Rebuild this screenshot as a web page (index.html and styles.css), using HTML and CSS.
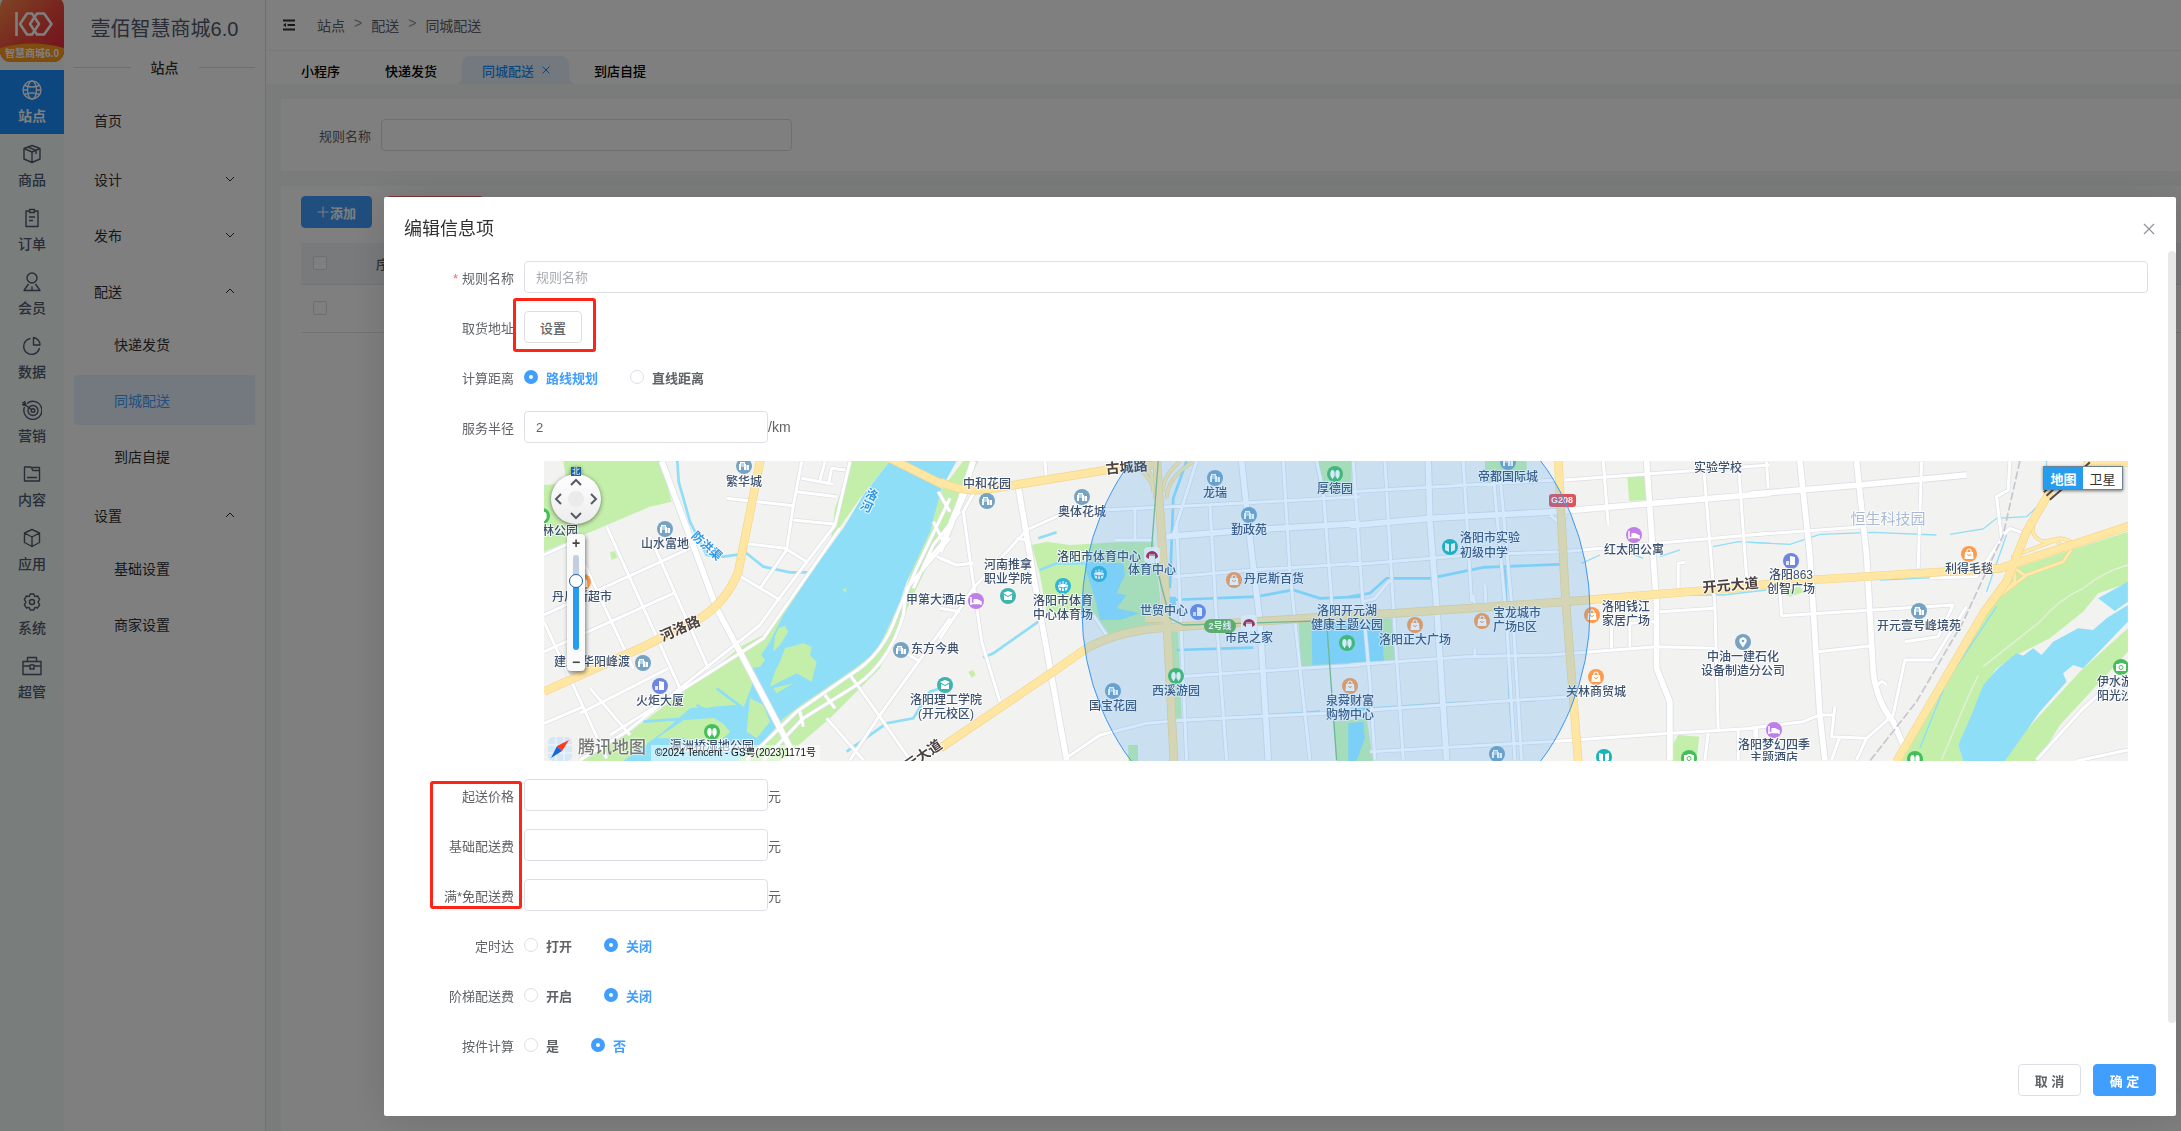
FILE: index.html
```html
<!DOCTYPE html>
<html lang="zh-CN">
<head>
    <meta charset="UTF-8">
    <meta name="viewport" content="width=device-width, initial-scale=1.0">
    <title>同城配送 - 壹佰智慧商城6.0</title>
    <link rel="stylesheet" href="styles.css">
</head>
<body>

    <div class="app">
        <!-- Icon rail -->
        <nav class="rail">
            <div class="logo">
                <svg viewBox="0 0 64 62" width="64" height="62">
                    <defs>
                        <linearGradient id="logoBg" x1="0" y1="0" x2="1" y2="1">
                            <stop offset="0" stop-color="#ff8a4a"/>
                            <stop offset="0.5" stop-color="#f04a3c"/>
                            <stop offset="1" stop-color="#e8203c"/>
                        </linearGradient>
                        <clipPath id="logoClip"><rect y="-4" width="64" height="66" rx="11"/></clipPath>
                    </defs>
                    <g clip-path="url(#logoClip)">
                        <rect width="64" height="62" fill="url(#logoBg)"/>
                        <path d="M0 48Q32 39 64 48V62H0Z" fill="#ff9a1e"/>
                    </g>
                    <g fill="none" stroke="#fff" stroke-width="2.6" stroke-linejoin="round">
                        <path d="M16.500 12V36"/>
                        <path d="M32 13.500H27L20 24L27 34.500H32L39 24Z"/>
                        <path d="M37 13.500H44L51.500 24L44 34.500H37L30 24Z"/>
                    </g>
                    <text x="32" y="57" class="logo-text">智慧商城6.0</text>
                </svg>
            </div>
            <a href="#" class="rail-item active">
                <svg class="icon" viewBox="0 0 20 20"><circle cx="10" cy="10" r="9"/><ellipse cx="10" cy="10" rx="4.500" ry="9"/><path d="M2.500 5.500Q10 8.500 17.500 5.500M2.500 14.500Q10 11.500 17.500 14.500M1 10H5.500M14.500 10H19"/></svg>
                <span>站点</span>
            </a>
            <a href="#" class="rail-item">
                <svg class="icon" viewBox="0 0 20 20"><path d="M10 1.500L18 4.500V15L10 18.500L2 15V4.500ZM2 4.500L10 8L18 4.500M10 8V18.500M6 3L14 6.300V10"/></svg>
                <span>商品</span>
            </a>
            <a href="#" class="rail-item">
                <svg class="icon" viewBox="0 0 20 20"><path d="M7 3H4V18.500H16V3H13M7.500 1.500H12.500V4.500H7.500ZM7 9H13M7 12.500H11"/></svg>
                <span>订单</span>
            </a>
            <a href="#" class="rail-item">
                <svg class="icon" viewBox="0 0 20 20"><circle cx="10" cy="6" r="5"/><path d="M6.500 12L2 18.500H18L13.500 12M10 14.500V18"/></svg>
                <span>会员</span>
            </a>
            <a href="#" class="rail-item">
                <svg class="icon" viewBox="0 0 20 20"><path d="M8.500 2.500A8 8 0 1 0 17.500 12"/><path d="M11.500 1.500A7.500 7.500 0 0 1 18 9H11.500Z"/></svg>
                <span>数据</span>
            </a>
            <a href="#" class="rail-item">
                <svg class="icon" viewBox="0 0 20 20"><path d="M5 3.500A9 9 0 1 1 2.500 7"/><circle cx="11" cy="10.500" r="5"/><circle cx="11" cy="10.500" r="1.800"/><path d="M0.500 2L4 5.500L10 10M2.500 1L4 5.500L0 4.500"/></svg>
                <span>营销</span>
            </a>
            <a href="#" class="rail-item">
                <svg class="icon" viewBox="0 0 20 20"><path d="M2.500 3H9L11 6.500H17.500V17H2.500ZM10 3.500H17.500V6.500M5 13.500H15"/></svg>
                <span>内容</span>
            </a>
            <a href="#" class="rail-item">
                <svg class="icon" viewBox="0 0 20 20"><path d="M10 1.500L17.500 5V14.500L10 18.500L2.500 14.500V5ZM2.500 5L10 9L17.500 5M10 9V18.500"/></svg>
                <span>应用</span>
            </a>
            <a href="#" class="rail-item">
                <svg class="icon" viewBox="0 0 20 20"><path d="M8.200 2H11.800L12.800 4.600L15.500 4L17.700 7.300L16 10L17.700 12.700L15.500 16L12.800 15.400L11.800 18H8.200L7.200 15.400L4.500 16L2.300 12.700L4 10L2.300 7.300L4.500 4L7.200 4.600Z"/><circle cx="10" cy="10" r="2.500"/></svg>
                <span>系统</span>
            </a>
            <a href="#" class="rail-item">
                <svg class="icon" viewBox="0 0 20 20"><path d="M1 5.500H19V18.500H1ZM5.500 5.500V1.500H14.500V5.500M1 10H8M12 10H19M8 9V13H12V9Z"/></svg>
                <span>超管</span>
            </a>
        </nav>

        <!-- Second level menu -->
        <aside class="sidebar">
            <h1 class="brand">壹佰智慧商城6.0</h1>
            <div class="divider"><span>站点</span></div>
            <nav class="menu">
                <a href="#" class="menu-item">首页</a>
                <a href="#" class="menu-title">设计<svg class="arrow" viewBox="0 0 10 10"><path d="M1 3L5 7L9 3"/></svg></a>
                <a href="#" class="menu-title">发布<svg class="arrow" viewBox="0 0 10 10"><path d="M1 3L5 7L9 3"/></svg></a>
                <a href="#" class="menu-title">配送<svg class="arrow" viewBox="0 0 10 10"><path d="M1 7L5 3L9 7"/></svg></a>
                <a href="#" class="menu-item sub">快递发货</a>
                <a href="#" class="menu-item sub active">同城配送</a>
                <a href="#" class="menu-item sub">到店自提</a>
                <a href="#" class="menu-title">设置<svg class="arrow" viewBox="0 0 10 10"><path d="M1 7L5 3L9 7"/></svg></a>
                <a href="#" class="menu-item sub">基础设置</a>
                <a href="#" class="menu-item sub">商家设置</a>
            </nav>
        </aside>

        <main class="main">
            <header class="topbar">
                <button class="fold" aria-label="收起菜单">
                    <svg viewBox="0 0 12 12" width="12" height="12"><path d="M0 1.500H12M4.500 6H12M0 10.500H12" stroke="#303133" stroke-width="1.800"/><path d="M0 6L3 4V8Z" fill="#303133"/></svg>
                </button>
                <div class="breadcrumb">
                    <a href="#">站点</a><span>&gt;</span><a href="#">配送</a><span>&gt;</span><a href="#">同城配送</a>
                </div>
            </header>
            <div class="tabs">
                <a href="#" class="tab">小程序</a>
                <a href="#" class="tab">快递发货</a>
                <a href="#" class="tab active">同城配送<svg class="tab-close" viewBox="0 0 10 10"><path d="M1.500 1.500L8.500 8.500M8.500 1.500L1.500 8.500"/></svg></a>
                <a href="#" class="tab">到店自提</a>
            </div>

            <section class="card search">
                <label for="searchName">规则名称</label>
                <input type="text" class="input" id="searchName">
            </section>

            <section class="card list">
                <div class="toolbar">
                    <button class="btn primary add"><svg viewBox="0 0 12 12" width="12" height="12"><path d="M6 0.500V11.500M0.500 6H11.500" stroke="#fff" stroke-width="1"/></svg>添加</button>
                    <button class="btn danger" aria-label="批量删除"></button>
                </div>
                <table class="table">
                    <thead>
                        <tr><th class="check"><input type="checkbox" aria-label="全选"></th><th>序号</th></tr>
                    </thead>
                    <tbody>
                        <tr><td class="check"><input type="checkbox" aria-label="选择"></td><td></td></tr>
                    </tbody>
                </table>
            </section>
        </main>
    </div>

    <!-- Edit dialog -->
    <div class="mask">
        <div class="dialog" role="dialog" aria-labelledby="dialogTitle">
            <header class="dialog-header">
                <h2 id="dialogTitle">编辑信息项</h2>
                <button class="close" aria-label="关闭">
                    <svg viewBox="0 0 12 12" width="12" height="12"><path d="M1 1L11 11M11 1L1 11" stroke="#909399" stroke-width="1.200"/></svg>
                </button>
            </header>

            <form class="dialog-body">
                <div class="row">
                    <label class="label required" for="ruleName">规则名称</label>
                    <input type="text" class="input grow" id="ruleName" placeholder="规则名称">
                </div>
                <div class="row">
                    <span class="label">取货地址</span>
                    <div class="marked">
                        <button type="button" class="btn">设置</button>
                        <span class="mark mark-address"></span>
                    </div>
                </div>
                <div class="row">
                    <span class="label">计算距离</span>
                    <label class="radio"><input type="radio" name="distance" checked><span>路线规划</span></label>
                    <label class="radio"><input type="radio" name="distance"><span>直线距离</span></label>
                </div>
                <div class="row">
                    <label class="label" for="radius">服务半径</label>
                    <input type="text" class="input short" id="radius" value="2">
                    <span class="unit">/km</span>
                </div>

                <div class="map">
                    <svg class="map-canvas" viewBox="0 0 1584 300" preserveAspectRatio="xMidYMid slice">
                        <defs>
                            <!-- POI icons, 16px discs centred on 0,0 -->
                            <g id="home"><circle r="8" fill="#76a3c4"/><path d="M-5 4V-2H-4V-4H1V-2H2V4H0V1H-3V4Z" fill="#fff"/><path d="M-3 -2H0M-3 0H0" stroke="#76a3c4"/><path d="M2.500 -1H5V4H2.500Z" fill="#fff"/></g>
                            <g id="tower"><circle r="8" fill="#6f86e0"/><path d="M-1 -5L4 -4V4H-1Z" fill="#fff"/><path d="M-5 0H-2V4H-5Z" fill="#fff" opacity=".8"/></g>
                            <g id="park"><circle r="8" fill="#45bf5a"/><ellipse cx="-2.500" rx="2.200" ry="4" fill="#fff"/><ellipse cx="2.500" rx="2.200" ry="4" fill="#fff"/><path d="M-2.500 0V5M2.500 0V5" stroke="#fff"/></g>
                            <g id="shop"><circle r="8" fill="#ff9a4c"/><path d="M-4 -2H4L4.500 5H-4.500Z" fill="#fff"/><path d="M-2 -1.500V-3A2 2 0 0 1 2 -3V-1.500" fill="none" stroke="#fff" stroke-width="1.200"/><path d="M-1.500 0A1.500 1.500 0 0 0 1.500 0" fill="none" stroke="#ff9a4c"/></g>
                            <g id="school"><circle r="8" fill="#3fb3ad"/><path d="M-5 -3L0 -5L5 -3L0 0Z" fill="#fff"/><path d="M-4 -1L0 1L4 -1V4H-4Z" fill="#fff"/></g>
                            <g id="book"><circle r="8" fill="#17b5b5"/><path d="M-5 -4L-1 -3V5L-5 3ZM5 -4L1 -3V5L5 3Z" fill="#fff"/></g>
                            <g id="stadium"><circle r="8" fill="#30b4d8"/><path d="M-5 -1Q0 -3 5 -1L4 4Q0 6 -4 4Z" fill="#fff"/><path d="M-3 -2V-4M0 -2V-5M3 -2V-4" stroke="#fff"/><path d="M-4 1Q0 3 4 1M-1.500 2V5M1.500 2V5" stroke="#30b4d8" fill="none"/></g>
                            <g id="hotel"><circle r="8" fill="#c07fe8"/><path d="M-5 -4V4M-5 2.500H5M5 4V0" stroke="#fff" stroke-width="1.500"/><path d="M-2.500 -2H1L5 0V2H-2.500Z" fill="#fff"/></g>
                            <g id="camera"><circle r="8" fill="#45bf5a"/><path d="M-5 -3H-2L-1 -4H2L3 -3H5V4H-5Z" fill="#fff"/><circle cy="0.500" r="2" fill="none" stroke="#45bf5a"/></g>
                            <g id="pin"><circle r="8" fill="#76a3c4"/><path d="M0 5.500L-3 1A3.600 3.600 0 1 1 3 1Z" fill="#fff"/><circle cy="-1" r="1.300" fill="#76a3c4"/></g>
                            <g id="metro"><rect x="-8" y="-8" width="16" height="16" rx="4" fill="#fff" opacity=".85"/><path d="M-6 2A6 6 0 0 1 6 2L3 4V1H-3V4Z" fill="#b5183a"/><path d="M-3 0H3" stroke="#fff"/></g>

                            <g id="streets">
                                <g transform="translate(-42 -18)">
                                    <path d="M42 500L230 910M165 330L310 640M230 215L450 700M360 245L535 640M42 480L480 280M42 590L430 415M150 775L415 640M42 805L160 755M42 300L140 255M180 700L300 840"/>
                                    <path d="M590 130L790 152M815 20L790 152L770 285L690 400M815 70L910 88M800 110L920 125M790 195L915 208M885 20L870 75M945 45L905 40L895 90M640 265L765 280L830 320M625 360L750 435"/>
                                    <path d="M960 20L915 210L740 440L690 510L450 700L290 830L150 915M930 220L700 550L400 740L240 840"/>
                                    <path d="M1260 130L1160 340L1100 480Q1060 600 960 660L800 770L650 915M1260 250L1130 400L1120 480Q1080 620 980 690L820 790L700 915M1290 170L1210 270L1150 400M1210 200L1240 260L1180 330M1225 110L1260 170"/>
                                    <path d="M1260 320L1220 305M1260 490L1050 780L960 915M960 660L1060 800L1140 915M1120 590L1170 620M885 720L915 760M810 770L820 815M890 790L1000 915"/>
                                </g>
                                <g transform="translate(1188 -18)">
                                    <path d="M70 170L125 560L180 740M0 310L50 330L100 325M0 550L100 400L260 225L360 180M70 170L120 80M315 18L320 80M385 905L480 840L620 805L740 795L1260 770M0 460L60 470M230 250L260 255M460 480L500 540"/>
                                    <path d="M490 165L800 150L1260 125M525 255L640 255M700 365L940 345L1260 325M720 665L1085 640L1260 630M585 160V255M810 150L830 500L860 915M1030 18L1050 350L1080 640L1110 915M1150 110L1180 500M710 200L740 915M770 18L700 240M1130 18L1150 110"/>
                                </g>
                                <g transform="translate(2418 -18)">
                                    <path d="M10 20L40 460L60 680L75 915M105 18L130 450L160 915M340 18L365 440M430 60L470 500L495 915M450 60L490 500L515 915M0 110L620 75M0 330L360 300L640 290L920 265L1260 235M645 75L1260 30M40 440L75 430L120 375M375 450L370 420M405 390L408 450M375 580V605"/>
                                    <path d="M0 630L350 605L600 600L920 575L1095 580M60 890L600 860L960 835L1215 820M60 765L660 725M760 18L775 210M1060 20L1095 450L1105 825M1165 20L1190 365M985 400V325L1005 322M785 580V510L840 505V575M840 505L915 500M930 470L1095 460M1075 835L1065 915M1165 820V915M1215 825V915M600 180L625 200L650 180"/>
                                </g>
                                <g transform="translate(3618 -18)">
                                    <path d="M50 20L55 100M515 20L505 340M0 240L340 215M90 400L95 482L610 450L565 545L465 560M205 590L365 572M650 455L550 615L465 615L430 780L350 850L245 845L255 755M210 780L160 800L0 820M780 18L775 105L740 125L755 250L680 365L540 368M755 245L780 220L815 232M270 845L245 915M350 850L320 915M385 690Q395 670 410 690M215 780H250M20 820V850"/>
                                    <path d="M1134 640L1000 760L860 915M980 918L1134 885"/>
                                </g>
                            </g>
                            <g id="avenues">
                                <path transform="translate(-42 -18)" d="M395 18L560 460L640 610L800 915M1265 200L1320 80"/>
                                <path transform="translate(1188 -18)" d="M100 18L60 140L0 290M235 95L280 360L380 915M905 18L930 250L960 500L985 915M680 245L930 225L1260 205"/>
                                <path transform="translate(2418 -18)" d="M235 18L240 200L260 450L290 915M0 212L240 190L620 170L1260 115M890 18L920 450V640L960 740V915"/>
                                <path transform="translate(3618 -18)" d="M150 18L180 300L210 780L225 915M320 18L350 300L370 650Q380 740 430 800L460 870M0 118L330 90L650 60"/>
                            </g>
                            <g id="highways">
                                <path transform="translate(-42 -18)" d="M42 710L330 580L420 535L510 490Q590 440 625 350L692 10M1080 10L1240 90"/>
                                <path transform="translate(1188 -18)" d="M0 80Q70 115 150 102L500 45L650 28M0 880L340 650L440 580Q540 525 680 518L940 500L1320 475M650 10L680 480L702 920M615 490H670"/>
                                <path transform="translate(2418 -18)" d="M85 478L650 440L1080 405L1200 396M625 10L645 400L660 600L685 920"/>
                                <path transform="translate(3618 -18)" d="M0 393L180 375L750 340L980 265L1140 212M900 110L830 230L770 380L700 475L440 920M1000 22H1140"/>
                            </g>
                            <g id="ramps">
                                <path transform="translate(1188 -18)" d="M560 20Q640 60 640 110M600 20Q650 60 645 130M760 20Q680 70 680 130M720 20Q670 60 668 110"/>
                                <path transform="translate(3618 -18)" d="M860 190Q830 240 880 260L930 250Q980 255 960 290L940 320L830 360L740 430M800 300L920 255L940 280M795 340L830 365M790 300L795 380L700 470"/>
                            </g>
                        </defs>

                        <rect width="1584" height="300" fill="#f2f2f0"/>
                        <g transform="scale(.3333)">
                            <!-- Parks -->
                            <g fill="#c3efab">
                                <path transform="translate(-42 -18)" d="M100 18H395L425 140L360 155L42 290V90L110 85ZM965 18H1080L990 130L920 230L850 340L740 560L690 600L640 570L700 540L900 280L915 160ZM240 292L255 288L262 308L245 314ZM640 570L740 560L800 750L960 650L1120 430L1200 150L1300 18H1345L1150 420L1050 640L900 790L750 918H150L300 830L500 680Z"/>
                                <path transform="translate(1188 -18)" d="M275 270L320 260L390 270L640 255L660 420L665 505L620 510L510 540L465 480L320 470L300 360ZM85 650L100 645L107 660L95 668ZM1135 18H1235V110H1135ZM695 530H715L725 790H705ZM1075 500L1355 490L1365 625L1085 640ZM1180 800L1280 790L1300 918H1190ZM565 870H594V918H565Z"/>
                                <path transform="translate(2418 -18)" d="M405 18H530V80H405ZM832 62L890 57V135L838 138ZM985 840L1048 845L1040 918H968V870Z"/>
                                <path transform="translate(3618 -18)" d="M795 340L980 280L1134 230V385L1045 415L1000 470L900 550L800 600L740 640L700 700L660 800L625 870L640 918H455L690 500ZM1134 520L990 650L780 880L760 918H865L930 810L1134 590ZM90 410L150 395L165 410L120 425Z"/>
                            </g>
                            <!-- Water -->
                            <g fill="#8fdef8">
                                <path transform="translate(-42 -18)" d="M1080 18H1280L1235 100L1200 230L1130 380L1110 440L1040 590L960 650L820 745L760 790L700 860L620 918H280L400 830L480 760L620 750L640 690L680 620L720 560L760 480L860 330L940 220L1000 120Z"/>
                                <path transform="translate(1188 -18)" d="M430 320L550 325L555 360L530 415L560 420L530 460L600 475L540 495H480L465 430ZM1115 505L1325 497L1332 618L1117 630ZM1225 805L1270 800L1275 850L1250 918H1225ZM688 425H708V450H688Z"/>
                                <path transform="translate(3618 -18)" d="M800 595L820 602L850 580L875 600L910 560L985 520L1030 525L1070 490L1134 450V500L1000 640L970 630L940 655L950 680L870 770L765 918H640L625 870L665 780L700 690L745 640ZM1045 430L1134 380V440L1095 468Z"/>
                            </g>
                            <g fill="#c3efab" transform="translate(-42 -18)">
                                <path d="M765 580L820 565L845 575L840 600L860 620L845 680L800 655L720 695L735 650L750 620ZM735 545L745 520L765 512L775 530L750 570L730 590ZM675 615L695 600L705 615L690 635L672 640ZM730 700L790 685L740 715ZM936 402L950 400L948 414ZM600 700L660 640L670 680L640 760L620 740ZM660 730L700 750L720 800L680 850L650 830ZM380 850L470 790L560 780L600 830L560 870L460 850ZM470 740L560 720L600 740L530 760Z"/>
                            </g>
                            <g fill="none" stroke="#8fdef8" stroke-width="8">
                                <path transform="translate(-42 -18)" d="M442 18L446 80L480 200L530 300L580 305L650 295L700 335L780 352L840 352M1260 690L1200 710L1150 790L1070 805L950 890M340 800L620 780M500 750L700 880M560 700L640 760"/>
                                <path transform="translate(1188 -18)" d="M690 435L950 425L1060 405L1140 430L1260 425M740 18L700 130L690 400M710 585L940 578M740 795L1080 775L1140 770M130 608L160 595L295 500M295 250L350 232M300 345L350 325L430 325"/>
                                <path transform="translate(2418 -18)" d="M0 425L60 415L110 370H240L400 337L630 328M465 340L480 740L495 915M0 765L300 745L560 735"/>
                            </g>
                            <g fill="none" stroke="#8fdef8" stroke-width="4">
                                <path transform="translate(2418 -18)" d="M695 325L750 300M830 290L880 310M930 305L990 285M1090 275L1165 260L1260 265M1000 420L1120 420L1250 405"/>
                                <path transform="translate(3618 -18)" d="M0 262L120 268L210 238L370 232L560 240M600 238L700 222L740 190L830 185L890 130V18M770 240L710 410M740 455L590 680L510 880M390 375L550 368"/>
                            </g>

                            <!-- Roads: casing first, then surface -->
                            <g fill="none" stroke-linejoin="round">
                                <use href="#streets" stroke="#dcdfe6" stroke-width="13"/>
                                <use href="#avenues" stroke="#dcdfe6" stroke-width="22"/>
                                <use href="#streets" stroke="#fff" stroke-width="9"/>
                                <use href="#avenues" stroke="#fff" stroke-width="17"/>
                                <path transform="translate(3618 -18)" d="M810 18L760 240L640 500L500 740L360 918" stroke="#c5c6d0" stroke-width="5" stroke-dasharray="24 8"/>
                                <path transform="translate(3618 -18)" d="M1134 330Q1060 350 1000 400Q930 430 870 500L700 635M685 660L640 760L575 915" stroke="#e4f0da" stroke-width="4"/>
                                <use href="#ramps" stroke="#f3d68d" stroke-width="12"/>
                                <use href="#ramps" stroke="#ffe9ac" stroke-width="8"/>
                                <use href="#highways" stroke="#f3d68d" stroke-width="26"/>
                                <use href="#highways" stroke="#ffe6a3" stroke-width="22"/>
                                <path transform="translate(1188 -18)" d="M655 18L635 280L690 490L730 510L1130 498L1160 500L1190 915" stroke="#7fc07f" stroke-width="4"/>
                                <path transform="translate(3618 -18)" d="M882 112L910 85M890 122L925 90M900 134L945 95M1000 40L1020 22" stroke="#5a4a48" stroke-width="6"/>
                            </g>
                        </g>

                        <!-- POIs -->
                        <use href="#home" x="200" y="5"/><use href="#home" x="121" y="68"/><use href="#home" x="99" y="202"/><use href="#home" x="357" y="189"/>
                        <use href="#home" x="443" y="40"/><use href="#home" x="538" y="36"/><use href="#home" x="671" y="17"/><use href="#home" x="705" y="54"/>
                        <use href="#home" x="569" y="230"/><use href="#home" x="964" y="1"/><use href="#home" x="953" y="293"/><use href="#home" x="1375" y="150"/>
                        <use href="#tower" x="116" y="225"/><use href="#tower" x="654" y="151"/><use href="#tower" x="1247" y="100"/>
                        <use href="#park" x="168" y="271"/><use href="#park" x="791" y="13"/><use href="#park" x="632" y="215"/><use href="#park" x="803" y="182"/><use href="#park" x="-2" y="55"/><use href="#park" x="1371" y="298"/>
                        <use href="#shop" x="39" y="121"/><use href="#shop" x="690" y="119"/><use href="#shop" x="806" y="225"/><use href="#shop" x="871" y="164"/>
                        <use href="#shop" x="938" y="160"/><use href="#shop" x="1048" y="154"/><use href="#shop" x="1052" y="216"/><use href="#shop" x="1425" y="93"/>
                        <use href="#school" x="401" y="224"/><use href="#school" x="464" y="135"/>
                        <use href="#book" x="906" y="86"/><use href="#book" x="1060" y="296"/>
                        <use href="#stadium" x="519" y="125"/><use href="#stadium" x="555" y="113"/>
                        <use href="#hotel" x="432" y="140"/><use href="#hotel" x="1090" y="74"/><use href="#hotel" x="1230" y="269"/>
                        <use href="#camera" x="1145" y="297"/><use href="#camera" x="1577" y="206"/>
                        <use href="#pin" x="1199" y="181"/>
                        <use href="#metro" x="608" y="94"/><use href="#metro" x="705" y="162"/>

                        <g class="poi mid">
                            <text x="200" y="25">繁华城</text>
                            <text x="121" y="87">山水富地</text>
                            <text x="116" y="244">火炬大厦</text>
                            <text x="402" y="243">洛阳理工学院</text>
                            <text x="402" y="257">(开元校区)</text>
                            <text x="168" y="289">瀛洲桥湿地公园</text>
                            <text x="443" y="27">中和花园</text>
                            <text x="538" y="55">奥体花城</text>
                            <text x="464" y="108">河南推拿</text>
                            <text x="464" y="122">职业学院</text>
                            <text x="608" y="113">体育中心</text>
                            <text x="519" y="144">洛阳市体育</text>
                            <text x="519" y="158">中心体育场</text>
                            <text x="671" y="36">龙瑞</text>
                            <text x="791" y="32">厚德园</text>
                            <text x="705" y="73">勤政苑</text>
                            <text x="705" y="181">市民之家</text>
                            <text x="803" y="154">洛阳开元湖</text>
                            <text x="803" y="168">健康主题公园</text>
                            <text x="632" y="234">西溪游园</text>
                            <text x="569" y="249">国宝花园</text>
                            <text x="806" y="244">泉舜财富</text>
                            <text x="806" y="258">购物中心</text>
                            <text x="964" y="20">帝都国际城</text>
                            <text x="871" y="183">洛阳正大广场</text>
                            <text x="1052" y="235">关林商贸城</text>
                            <text x="1090" y="93">红太阳公寓</text>
                            <text x="1174" y="11">实验学校</text>
                            <text x="1199" y="200">中油一建石化</text>
                            <text x="1199" y="214">设备制造分公司</text>
                            <text x="1247" y="118">洛阳863</text>
                            <text x="1247" y="132">创智广场</text>
                            <text x="1425" y="112">利得毛毯</text>
                            <text x="1375" y="169">开元壹号峰境苑</text>
                            <text x="1230" y="288">洛阳梦幻四季</text>
                            <text x="1230" y="301">主题酒店</text>
                        </g>
                        <g class="poi">
                            <text x="-2" y="74">林公园</text>
                            <text x="8" y="140">丹尼斯超市</text>
                            <text x="367" y="192">东方今典</text>
                            <text x="513" y="100">洛阳市体育中心</text>
                            <text x="700" y="122">丹尼斯百货</text>
                            <text x="916" y="81">洛阳市实验</text>
                            <text x="916" y="96">初级中学</text>
                            <text x="949" y="156">宝龙城市</text>
                            <text x="949" y="170">广场B区</text>
                            <text x="1058" y="150">洛阳钱江</text>
                            <text x="1058" y="164">家居广场</text>
                            <text x="1553" y="225">伊水游园</text>
                            <text x="1553" y="239">阳光沙滩</text>
                        </g>
                        <g class="poi end">
                            <text x="86" y="205">建业·华阳峰渡</text>
                            <text x="422" y="143">甲第大酒店</text>
                            <text x="644" y="154">世贸中心</text>
                        </g>
                        <text class="district" x="1344" y="63">恒生科技园</text>
                        <g class="road-name">
                            <text transform="translate(138 172) rotate(-24)">河洛路</text>
                            <text transform="translate(583 11) rotate(-5)">古城路</text>
                            <text transform="translate(1187 129) rotate(-5)">开元大道</text>
                            <text transform="translate(382 298) rotate(-35)">元大道</text>
                        </g>
                        <g class="water-name">
                            <text transform="translate(328 34) rotate(25)"><tspan x="0" y="4">洛</tspan><tspan x="0" y="17">河</tspan></text>
                            <text transform="translate(160 88) rotate(43)">防洪渠</text>
                        </g>
                        <rect x="660" y="158" width="32" height="14" rx="7" fill="#68b14c"/>
                        <text class="badge-text" x="676" y="168">2号线</text>
                        <rect x="1005" y="33" width="27" height="13" rx="3" fill="#e0525c"/>
                        <text class="badge-text" x="1018" y="42">G208</text>

                        <!-- Service radius -->
                        <circle class="range" cx="792" cy="150" r="254"/>
                    </svg>

                    <div class="map-pan">
                        <svg viewBox="0 0 60 60" width="60" height="60">
                            <defs>
                                <linearGradient id="panBg" x1="0" y1="0" x2="0" y2="1"><stop offset="0" stop-color="#fff"/><stop offset="1" stop-color="#ececec"/></linearGradient>
                            </defs>
                            <circle cx="30" cy="33" r="25" fill="url(#panBg)"/>
                            <circle cx="30" cy="33" r="8" fill="#ebebeb"/>
                            <path d="M25 19L30 14L35 19M25 47L30 52L35 47M15 28L10 33L15 38M45 28L50 33L45 38" fill="none" stroke="#555b66" stroke-width="2"/>
                        </svg>
                        <span class="north">北</span>
                    </div>
                    <div class="map-zoom">
                        <button type="button" aria-label="放大">+</button>
                        <input type="range" min="0" max="100" value="77" aria-label="缩放级别">
                        <button type="button" aria-label="缩小">−</button>
                    </div>
                    <div class="map-types">
                        <button type="button" class="active">地图</button>
                        <button type="button">卫星</button>
                    </div>
                    <div class="map-credit">
                        <svg viewBox="0 0 26 24" width="26" height="24">
                            <rect x="1" width="24" height="24" rx="5" fill="#d6e8f8"/>
                            <path d="M1 8H25M1 16H25M9 0V24M17 0V24" stroke="#f3f8fc" stroke-width="1"/>
                            <path d="M22 3L15 14L10 9Z" fill="#ff3a1c"/>
                            <path d="M4 21L10 9L15 14Z" fill="#1767d8"/>
                        </svg>
                        <strong>腾讯地图</strong>
                        <small>©2024 Tencent - GS粤(2023)1171号</small>
                    </div>
                </div>

                <div class="marked">
                    <div class="row">
                        <label class="label" for="startPrice">起送价格</label>
                        <input type="text" class="input short" id="startPrice">
                        <span>元</span>
                    </div>
                    <div class="row">
                        <label class="label" for="baseFee">基础配送费</label>
                        <input type="text" class="input short" id="baseFee">
                        <span>元</span>
                    </div>
                    <div class="row">
                        <label class="label" for="freeFee">满*免配送费</label>
                        <input type="text" class="input short" id="freeFee">
                        <span>元</span>
                    </div>
                    <span class="mark mark-fees"></span>
                </div>
                <div class="row">
                    <span class="label">定时达</span>
                    <label class="radio"><input type="radio" name="timed"><span>打开</span></label>
                    <label class="radio"><input type="radio" name="timed" checked><span>关闭</span></label>
                </div>
                <div class="row">
                    <span class="label">阶梯配送费</span>
                    <label class="radio"><input type="radio" name="ladder"><span>开启</span></label>
                    <label class="radio"><input type="radio" name="ladder" checked><span>关闭</span></label>
                </div>
                <div class="row">
                    <span class="label">按件计算</span>
                    <label class="radio"><input type="radio" name="piece"><span>是</span></label>
                    <label class="radio"><input type="radio" name="piece" checked><span>否</span></label>
                </div>
                <span class="scroll-thumb"></span>
            </form>

            <footer class="dialog-footer">
                <button class="btn">取 消</button>
                <button class="btn primary">确 定</button>
            </footer>
        </div>
    </div>

</body>
</html>
```
FILE: styles.css
```css
* {
    box-sizing: border-box;
}

body, html {
    height: 100%;
    margin: 0;
    overflow: hidden;
    font-family: "Liberation Sans", "Noto Sans CJK SC", sans-serif;
    font-size: 13px;
    color: #606266;
    background-color: #f3f8f6;
}

a {
    color: inherit;
    text-decoration: none;
}

button, input {
    font-family: inherit;
    font-size: 13px;
    margin: 0;
}

.app {
    display: flex;
    height: 100%;
}

/* Icon rail */
.rail {
    width: 64px;
    flex: none;
    background-color: #f3faf7;
}

.logo {
    height: 70px;
}

.logo svg {
    display: block;
}

.logo-text {
    font-size: 10px;
    font-weight: bold;
    fill: #fff;
    text-anchor: middle;
}

.rail-item {
    display: flex;
    flex-direction: column;
    align-items: center;
    gap: 6px;
    height: 64px;
    padding-top: 10px;
    font-size: 14px;
    line-height: 20px;
    font-weight: 500;
    color: #515a6e;
}

.rail-item.active {
    background-color: #1890ff;
    color: #fff;
    font-weight: bold;
}

.icon {
    width: 20px;
    height: 20px;
    fill: none;
    stroke: currentColor;
    stroke-width: 1.4;
    stroke-linejoin: round;
}

/* Sidebar */
.sidebar {
    width: 202px;
    flex: none;
    padding: 0 10px;
    background-color: #fff;
    border-right: 1px solid #dcdfe6;
}

.brand {
    margin: 0;
    font-size: 20px;
    line-height: 58px;
    font-weight: normal;
    text-align: center;
    color: #515a6e;
}

.divider {
    display: flex;
    align-items: center;
    gap: 20px;
    height: 18px;
    margin-bottom: 19px;
    font-size: 14px;
    font-weight: 500;
    color: #303133;
}

.divider::before,
.divider::after {
    content: "";
    flex: 1;
    border-top: 1px solid #dcdfe6;
}

.menu-item,
.menu-title {
    display: flex;
    align-items: center;
    justify-content: space-between;
    padding: 0 20px;
    font-size: 14px;
    color: #303133;
}

.menu-item {
    height: 50px;
    margin-bottom: 6px;
}

.menu-title {
    height: 56px;
}

.menu-item.sub {
    padding-left: 40px;
}

.menu-item.active {
    background-color: #e8f2ff;
    color: #409eff;
}

.arrow {
    width: 10px;
    height: 10px;
    fill: none;
    stroke: #303133;
}

/* Main area */
.main {
    display: flex;
    flex-direction: column;
    flex: 1;
    min-width: 0;
}

.topbar {
    display: flex;
    align-items: center;
    gap: 22px;
    height: 51px;
    padding: 0 17px;
    background-color: #fff;
    border-bottom: 1px solid #f0f2f5;
}

.fold {
    display: flex;
    padding: 0;
    border: none;
    background: none;
}

.breadcrumb {
    display: flex;
    gap: 9px;
    font-size: 14px;
}

.breadcrumb span {
    color: #909399;
}

.tabs {
    display: flex;
    align-items: flex-end;
    gap: 5px;
    height: 33px;
    padding: 0 15px;
    background-color: #fff;
}

.tab {
    display: flex;
    align-items: center;
    gap: 7px;
    height: 28px;
    padding: 0 20px;
    font-weight: 500;
    color: #000;
    position: relative;
}

.tab.active {
    padding-right: 18px;
    background-color: #e8f2ff;
    color: #1890ff;
    border-radius: 8px 8px 0 0;
}

.tab.active::before,
.tab.active::after {
    content: "";
    position: absolute;
    bottom: 0;
    width: 8px;
    height: 8px;
    background: radial-gradient(circle at 0 0, transparent 8px, #e8f2ff 8px);
}

.tab.active::before {
    left: -8px;
}

.tab.active::after {
    right: -8px;
    background: radial-gradient(circle at 100% 0, transparent 8px, #e8f2ff 8px);
}

.tab-close {
    width: 10px;
    height: 10px;
    stroke: #1890ff;
}

.card {
    margin: 15px 0 0 15px;
    background-color: #fff;
}

.search {
    display: flex;
    align-items: center;
    gap: 10px;
    height: 72px;
    padding: 0 38px;
}

.search .input {
    width: 411px;
}

.list {
    flex: 1;
    padding: 10px 0 0 20px;
}

.toolbar {
    display: flex;
    gap: 14px;
    margin-bottom: 15px;
}

.table {
    width: 100%;
    border-collapse: collapse;
    text-align: left;
}

.table th {
    height: 41px;
    background-color: #f2f4f8;
    font-size: 13px;
    font-weight: 500;
}

.table td {
    height: 48px;
}

.table th,
.table td {
    padding: 0 12px;
    border-bottom: 1px solid #e4e7ed;
}

.table .check {
    width: 63px;
}

input[type="checkbox"] {
    appearance: none;
    display: block;
    width: 14px;
    height: 14px;
    border: 1px solid #dcdfe6;
    border-radius: 2px;
    background-color: #fff;
}

/* Shared controls */
.input {
    height: 32px;
    padding: 0 11px;
    border: 1px solid #dcdfe6;
    border-radius: 4px;
    background-color: #fff;
    color: #606266;
    outline: none;
}

.input::placeholder {
    color: #a8abb2;
}

.btn {
    height: 32px;
    padding: 0 15px;
    border: 1px solid #dcdfe6;
    border-radius: 4px;
    background-color: #fff;
    color: #606266;
    font-weight: 500;
    cursor: pointer;
}

.btn.primary {
    border-color: #409eff;
    background-color: #409eff;
    color: #fff;
    font-weight: bold;
}

.btn.danger {
    width: 98px;
    border-color: #f56c6c;
    background-color: #f56c6c;
    color: #fff;
}

.btn.add {
    display: flex;
    align-items: center;
    gap: 1px;
}

/* Dialog */
.mask {
    position: fixed;
    inset: 0;
    display: flex;
    padding: 197px 5px 15px 384px;
    background-color: rgba(0, 0, 0, 0.5);
}

.dialog {
    display: flex;
    flex-direction: column;
    flex: 1;
    min-width: 0;
    background-color: #fff;
    border-radius: 2px;
    box-shadow: 1px 1px 40px rgba(0, 0, 0, 0.14);
}

.dialog-header {
    display: flex;
    justify-content: space-between;
    align-items: center;
    padding: 20px 21px 10px 20px;
}

.dialog-header h2 {
    margin: 0;
    font-size: 18px;
    line-height: 24px;
    font-weight: normal;
    color: #303133;
}

.close {
    display: flex;
    padding: 0;
    border: none;
    background: none;
    cursor: pointer;
}

.dialog-body {
    position: relative;
    flex: 1;
    min-height: 0;
    padding: 10px 28px 0 20px;
}

.row {
    display: flex;
    align-items: center;
    height: 32px;
    margin-bottom: 18px;
}

.label {
    width: 120px;
    flex: none;
    padding-right: 10px;
    text-align: right;
}

.required::before {
    content: "*";
    margin-right: 4px;
    color: #f56c6c;
}

.unit {
    font-size: 14px;
}

.grow {
    flex: 1;
}

.short {
    width: 244px;
}

.radio {
    display: flex;
    align-items: center;
    gap: 8px;
    margin-right: 32px;
    font-weight: bold;
}

.radio input {
    appearance: none;
    width: 14px;
    height: 14px;
    border: 1px solid #dcdfe6;
    border-radius: 50%;
    background-color: #fff;
}

.radio input:checked {
    border: 5px solid #409eff;
}

.radio input:checked + span {
    color: #409eff;
}

.scroll-thumb {
    position: absolute;
    top: 0;
    right: 0;
    width: 8px;
    height: 95%;
    border-radius: 4px;
    background-color: #e8e8e8;
}

.dialog-footer {
    display: flex;
    justify-content: flex-end;
    gap: 12px;
    padding: 0 20px 20px;
}

.dialog-footer .btn {
    min-width: 63px;
    font-weight: bold;
}

/* Red highlight frames */
.marked {
    position: relative;
}

.mark {
    position: absolute;
    border: 3px solid #ff2416;
    border-radius: 3px;
    pointer-events: none;
}

.mark-address {
    inset: -13px -14px -9px -11px;
}

.mark-fees {
    top: 2px;
    left: 26px;
    width: 92px;
    height: 128px;
}

/* Map */
.map {
    position: relative;
    height: 300px;
    margin: 0 20px 18px 140px;
    overflow: hidden;
}

.map-canvas {
    display: block;
    width: 100%;
    height: 100%;
}

.map text {
    paint-order: stroke;
    stroke: rgba(255, 255, 255, 0.8);
    stroke-width: 2px;
    stroke-linejoin: round;
}

.poi {
    font-size: 12px;
    font-weight: 500;
    fill: #3c5070;
}

.mid,
.district,
.road-name,
.water-name,
.badge-text {
    text-anchor: middle;
}

.end {
    text-anchor: end;
}

.district {
    font-size: 15px;
    fill: #a9bad2;
}

.road-name {
    font-size: 14px;
    font-weight: bold;
    fill: #4a4042;
}

.water-name {
    font-size: 12px;
    font-weight: bold;
    fill: #2f97e8;
}

.map .badge-text {
    font-size: 9px;
    font-weight: bold;
    fill: #fff;
    stroke: none;
}

.range {
    fill: rgba(60, 155, 240, 0.22);
    stroke: #3f97f0;
    stroke-width: 1;
}

.map-pan {
    position: absolute;
    top: 5px;
    left: 2px;
    filter: drop-shadow(0 1px 2px rgba(0, 0, 0, 0.5));
}

.map-pan svg {
    display: block;
}

.north {
    position: absolute;
    top: 1px;
    left: 25px;
    width: 10px;
    background-color: #1a5f9e;
    color: #fff;
    font-size: 8px;
    line-height: 9px;
    text-align: center;
}

.map-zoom {
    position: absolute;
    top: 73px;
    left: 23px;
    display: flex;
    flex-direction: column;
    align-items: center;
    justify-content: space-between;
    width: 18px;
    height: 137px;
    border-radius: 4px;
    background-color: #fafafa;
    box-shadow: 1px 2px 4px rgba(0, 0, 0, 0.5);
}

.map-zoom button {
    width: 18px;
    height: 18px;
    padding: 0;
    border: none;
    background: none;
    font-size: 14px;
    font-weight: bold;
    line-height: 18px;
    color: #444;
}

.map-zoom input {
    appearance: none;
    writing-mode: vertical-lr;
    direction: rtl;
    width: 6px;
    height: 95px;
    border-radius: 3px;
    background: linear-gradient(#c3cfdf 28%, #259ced 28%);
}

.map-zoom input::-webkit-slider-thumb {
    appearance: none;
    width: 14px;
    height: 14px;
    border: 1px solid #1a5f9e;
    border-radius: 50%;
    background-color: #fff;
}

.map-types {
    position: absolute;
    top: 5px;
    right: 5px;
    display: flex;
    border: 1px solid #6f8296;
    box-shadow: 0 1px 3px rgba(0, 0, 0, 0.5);
}

.map-types button {
    width: 39px;
    height: 22px;
    padding: 0;
    border: none;
    background-color: #fff;
    color: #333;
}

.map-types .active {
    background-color: #259ced;
    color: #fff;
    font-weight: bold;
}

.map-credit {
    position: absolute;
    bottom: 0;
    left: 3px;
    display: flex;
    align-items: flex-end;
    gap: 5px;
}

.map-credit strong {
    font-size: 17px;
    line-height: 26px;
    font-weight: 500;
    color: #777;
    text-shadow: 0 0 2px #fff, 0 0 2px #fff;
}

.map-credit small {
    padding: 0 4px;
    background-color: rgba(255, 255, 255, 0.5);
    font-size: 10px;
    line-height: 16px;
    color: #111;
}
```
